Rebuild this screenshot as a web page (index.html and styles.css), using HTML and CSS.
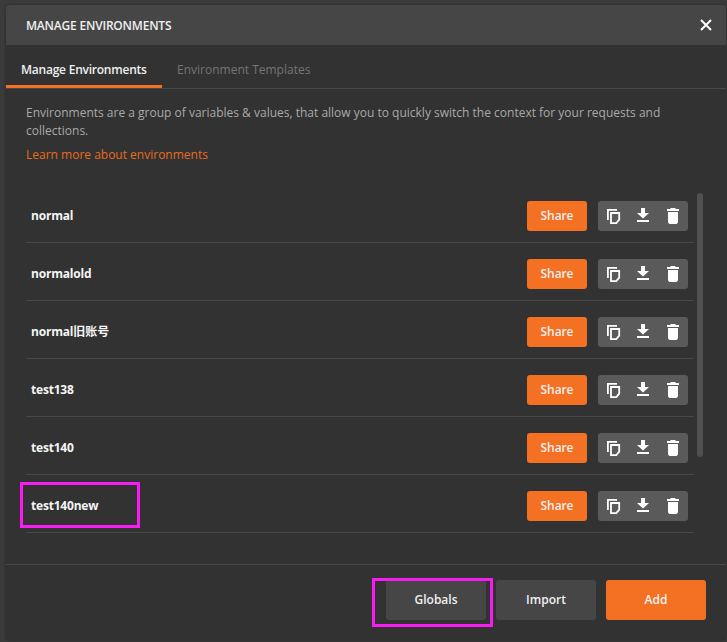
FILE: index.html
```html
<!DOCTYPE html>
<html lang="en">
<head>
<meta charset="utf-8">
<title>Manage Environments</title>
<link rel="stylesheet" href="styles.css">
</head>
<body>
<svg class="sprite" aria-hidden="true">
  <symbol id="copy" viewBox="0 0 14 16"><path d="M.9 12V1.900H10" fill="none" stroke="#fff" stroke-width="1.800"/><path d="M4 5h8.200v6.700L9.300 15.100H4z" fill="none" stroke="#fff" stroke-width="1.800"/></symbol>
  <symbol id="download" viewBox="0 0 14 16"><path d="M4 0h4v5h4L6 10.500 0 5h4zM0 12h12v2H0z" fill="#fff"/></symbol>
  <symbol id="trash" viewBox="0 0 14 16"><path d="M4 0h4l1 1h3v2H0V1h3zM1 4h10v10.500L9.500 16h-7L1 14.500z" fill="#fff"/></symbol>
</svg>
<main class="modal">
  <header class="header">
    <h1>MANAGE ENVIRONMENTS</h1>
    <svg class="close" viewBox="0 0 12 12"><path d="M1 1l10 10M11 1L1 11" stroke="#fff" stroke-width="2"/></svg>
  </header>
  <nav class="tabs">
    <a class="tab active">Manage Environments</a>
    <a class="tab">Environment Templates</a>
  </nav>
  <section class="content">
    <p class="intro">Environments are a group of variables &amp; values, that allow you to quickly switch the context for your requests and collections.</p>
    <a class="learn">Learn more about environments</a>
    <div class="list-area">
      <ul class="list">
        <li class="row"><span class="name">normal</span><button class="share">Share</button><div class="actions"><svg><use href="#copy"/></svg><svg><use href="#download"/></svg><svg><use href="#trash"/></svg></div></li>
        <li class="row"><span class="name">normalold</span><button class="share">Share</button><div class="actions"><svg><use href="#copy"/></svg><svg><use href="#download"/></svg><svg><use href="#trash"/></svg></div></li>
        <li class="row"><span class="name">normal<span class="cjk">旧账号</span></span><button class="share">Share</button><div class="actions"><svg><use href="#copy"/></svg><svg><use href="#download"/></svg><svg><use href="#trash"/></svg></div></li>
        <li class="row"><span class="name">test138</span><button class="share">Share</button><div class="actions"><svg><use href="#copy"/></svg><svg><use href="#download"/></svg><svg><use href="#trash"/></svg></div></li>
        <li class="row"><span class="name">test140</span><button class="share">Share</button><div class="actions"><svg><use href="#copy"/></svg><svg><use href="#download"/></svg><svg><use href="#trash"/></svg></div></li>
        <li class="row marked"><span class="name">test140new</span><button class="share">Share</button><div class="actions"><svg><use href="#copy"/></svg><svg><use href="#download"/></svg><svg><use href="#trash"/></svg></div></li>
      </ul>
      <div class="scrollbar"></div>
    </div>
  </section>
  <footer class="footer">
    <div class="globals"><button class="btn">Globals</button></div>
    <button class="btn">Import</button>
    <button class="btn primary">Add</button>
  </footer>
</main>
</body>
</html>
```
FILE: styles.css
```css
*, *::after { box-sizing: border-box; }
body {
  margin: 0;
  height: 642px;
  padding: 5px 1px 2px 6px;
  overflow: hidden;
  background: #3b3b3b;
  color: #f0f0f0;
  font: 12px/18px "Open Sans", "Noto Sans CJK SC", sans-serif;
}
.sprite { position: absolute; width: 0; height: 0; }
.modal {
  display: flex;
  flex-direction: column;
  height: 635px;
  background: #323232;
  border-radius: 3px;
  box-shadow: 0 0 3px rgba(0, 0, 0, .4);
}
.header {
  display: flex;
  align-items: center;
  justify-content: space-between;
  height: 40px;
  padding: 0 14px 0 20px;
  background: #464646;
  border-radius: 3px 3px 0 0;
}
h1 { margin: 0; padding-top: 2px; font-size: 12px; font-weight: 600; letter-spacing: -.2px; }
.close { width: 12px; height: 12px; }
.tabs { display: flex; height: 44px; border-bottom: 1px solid #484848; }
.tab { height: 43px; padding: 16px 15px 0; color: #747474; }
.tab.active { width: 156px; color: #f0f0f0; font-weight: 600; letter-spacing: -.23px; border-bottom: 3px solid #f47023; white-space: nowrap; }
.content { height: 475px; padding: 15px 20px 0; color: #a9a9a9; }
.intro { margin: 0 0 6px; }
.learn { display: block; color: #e96b20; }
.list-area { display: flex; gap: 3px; margin-top: 21px; }
.list { width: 668px; margin: 0; padding: 0; list-style: none; }
.row {
  position: relative;
  display: flex;
  align-items: center;
  height: 58px;
  padding: 5px 6px 0 5px;
  border-bottom: 1px solid #484848;
}
.name { flex: 1; color: #f5f5f5; font-weight: 700; letter-spacing: -.2px; }
.cjk { letter-spacing: 0; }
button {
  border: 0;
  padding: 0;
  border-radius: 3px;
  color: #f0f0f0;
  font: 600 12px/18px "Open Sans", sans-serif;
}
.share { width: 60px; height: 30px; margin-right: 11px; background: #f47023; letter-spacing: -.1px; }
.actions {
  display: flex;
  align-items: center;
  width: 90px;
  height: 30px;
  padding-left: 9px;
  gap: 16px;
  background: #5a5a5a;
  border-radius: 3px;
}
.actions svg { width: 14px; height: 16px; }
.scrollbar { width: 6px; height: 264px; margin-top: 8px; border-radius: 3px; background: #505050; }
.marked::after {
  content: "";
  position: absolute;
  left: -6px;
  top: 7px;
  width: 120px;
  height: 46px;
  border: 3px solid #f91bf3;
}
.footer {
  display: flex;
  justify-content: flex-end;
  gap: 10px;
  padding: 15px 20px 0;
  border-top: 1px solid #484848;
  flex: 1;
}
.btn { width: 100px; height: 40px; background: #464646; }
.btn.primary { background: #f47023; }
.globals { position: relative; height: 40px; }
.globals::after {
  content: "";
  position: absolute;
  left: -14px;
  top: -2px;
  width: 121px;
  height: 49px;
  border: 3px solid #f91bf3;
}
```
